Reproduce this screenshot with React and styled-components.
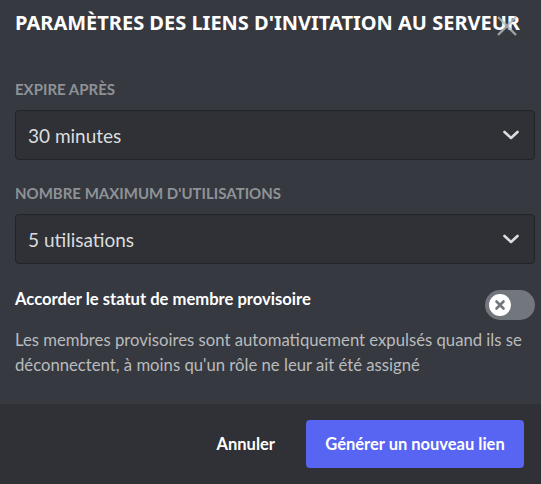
import styled, { createGlobalStyle } from "styled-components";

const GlobalStyle = createGlobalStyle`
  html, body {
    margin: 0;
    padding: 0;
    background: #36393f;
  }
  * { box-sizing: border-box; }
`;

const Modal = styled.div`
  width: 541px;
  height: 484px;
  background: #36393f;
  font-family: Lato, "Noto Sans", sans-serif;
  display: flex;
  flex-direction: column;
  position: relative;
  overflow: hidden;
`;

const Header = styled.div`
  padding: 10px 15px 0;
  height: 79px;
`;

const Title = styled.h2`
  margin: 0;
  color: #ffffff;
  font-family: "Noto Sans", sans-serif;
  font-size: 20px;
  line-height: 25px;
  font-weight: 700;
  text-transform: uppercase;
  white-space: nowrap;
`;

const CloseButton = styled.button`
  position: absolute;
  top: 13px;
  right: 21px;
  width: 26px;
  height: 26px;
  padding: 0;
  border: none;
  background: none;
  color: #b9bbbe;
  opacity: 0.8;
  cursor: pointer;
`;

const Body = styled.div`
  flex: 1;
  padding: 0 6px 0 15px;
`;

const Label = styled.div`
  color: #8e9297;
  font-size: 15px;
  line-height: 20px;
  font-weight: 700;
  text-transform: uppercase;
  margin-bottom: ${(p) => p.$gap || 11}px;
`;

const Select = styled.div`
  height: 50px;
  margin-bottom: ${(p) => p.$after || 0}px;
  background: #2f3136;
  border: 1px solid #232428;
  border-radius: 4px;
  display: flex;
  align-items: center;
  justify-content: space-between;
  padding: 0 13px 0 12px;
  color: #dcddde;
  font-size: 19px;
`;

const SwitchRow = styled.div`
  display: flex;
  align-items: flex-start;
  justify-content: space-between;
  height: 30px;
  margin-top: 26px;
`;

const SwitchLabel = styled.div`
  color: #ffffff;
  font-size: 16.6px;
  line-height: 19px;
  font-weight: 700;
`;

const Toggle = styled.div`
  width: 50px;
  height: 30px;
  border-radius: 15px;
  background: #72767d;
  padding: 4px;
  display: flex;
  align-items: center;
`;

const Knob = styled.div`
  width: 22px;
  height: 22px;
  border-radius: 50%;
  background: #ffffff;
  display: flex;
  align-items: center;
  justify-content: center;
  color: #72767d;
`;

const Note = styled.p`
  margin: 8px 0 0;
  color: #b9bbbe;
  font-size: 16.7px;
  line-height: 25px;
  padding-right: 4px;
`;

const Footer = styled.div`
  height: 80px;
  background: #2f3136;
  display: flex;
  align-items: center;
  justify-content: flex-end;
  padding: 0 17px 0 0;
  gap: 31px;
`;

const TextButton = styled.button`
  background: none;
  border: none;
  color: #ffffff;
  font-family: inherit;
  font-size: 16.5px;
  font-weight: 700;
  padding: 0;
  cursor: pointer;
`;

const PrimaryButton = styled.button`
  width: 218px;
  height: 48px;
  background: #5865f2;
  border: none;
  border-radius: 4px;
  color: #ffffff;
  font-family: inherit;
  font-size: 16.5px;
  font-weight: 700;
  cursor: pointer;
`;

const Chevron = () => (
  <svg width="20" height="20" viewBox="0 0 20 20" fill="none">
    <path d="M3.5 7l6.5 6 6.5-6" stroke="#dcddde" strokeWidth="2.6" strokeLinecap="round" strokeLinejoin="round" />
  </svg>
);

export default function App() {
  return (
    <>
      <GlobalStyle />
      <Modal>
        <Header>
          <Title>Paramètres des liens d'invitation au serveur</Title>
        </Header>
        <CloseButton aria-label="Fermer">
          <svg width="26" height="26" viewBox="0 0 26 26">
            <path d="M4 4L22 22M22 4L4 22" stroke="currentColor" strokeWidth="2.4" />
          </svg>
        </CloseButton>
        <Body>
          <Label>Expire après</Label>
          <Select $after={23}>
            <span>30 minutes</span>
            <Chevron />
          </Select>
          <Label>Nombre maximum d'utilisations</Label>
          <Select>
            <span>5 utilisations</span>
            <Chevron />
          </Select>
          <SwitchRow>
            <SwitchLabel>Accorder le statut de membre provisoire</SwitchLabel>
            <Toggle>
              <Knob>
                <svg width="12" height="12" viewBox="0 0 12 12">
                  <path d="M2.5 2.5L9.5 9.5M9.5 2.5L2.5 9.5" stroke="currentColor" strokeWidth="2.6" strokeLinecap="round" />
                </svg>
              </Knob>
            </Toggle>
          </SwitchRow>
          <Note>
            Les membres provisoires sont automatiquement expulsés quand ils se déconnectent, à moins qu'un rôle ne leur ait été assigné
          </Note>
        </Body>
        <Footer>
          <TextButton>Annuler</TextButton>
          <PrimaryButton>Générer un nouveau lien</PrimaryButton>
        </Footer>
      </Modal>
    </>
  );
}
